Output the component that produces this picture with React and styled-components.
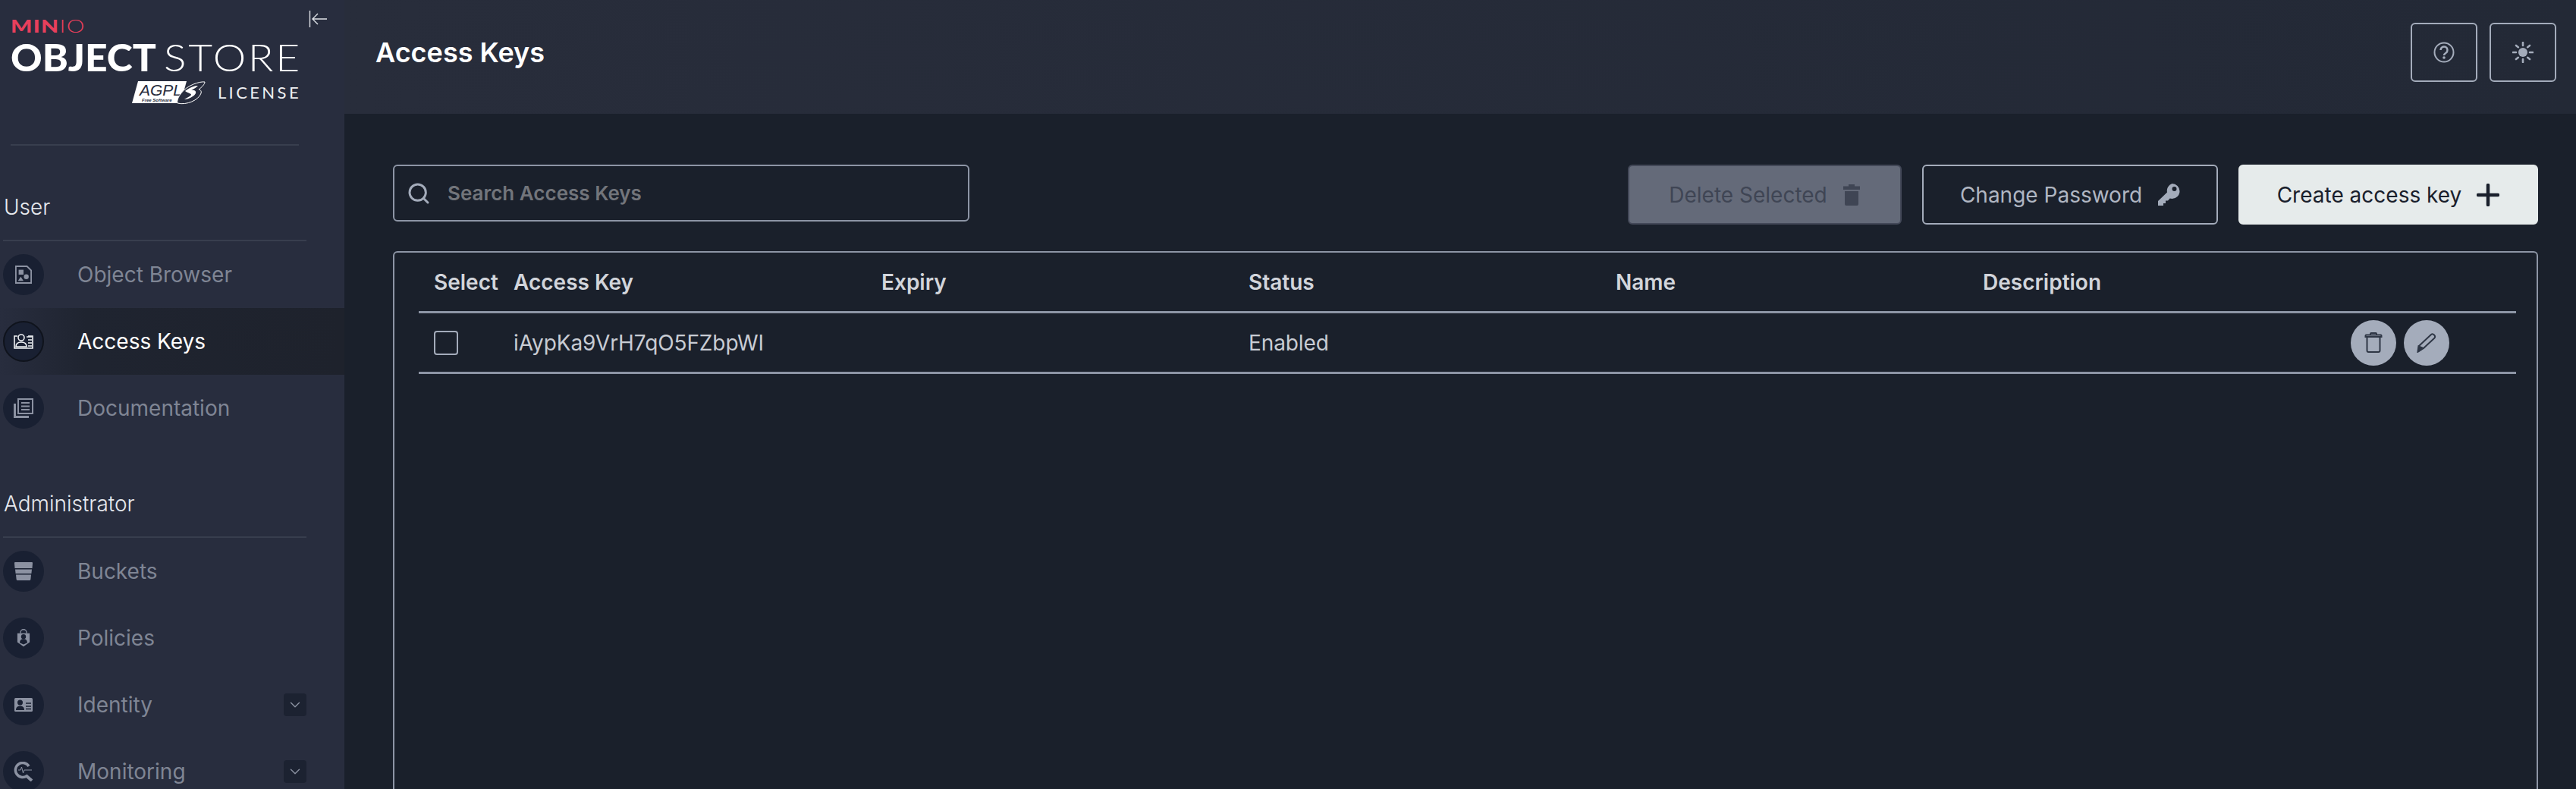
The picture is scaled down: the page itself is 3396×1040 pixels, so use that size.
import React from "react";
import styled, { createGlobalStyle } from "styled-components";
import { ChevronDown, Search } from "lucide-react";

const Global = createGlobalStyle`
  html, body { margin: 0; padding: 0; background: #1a202b; }
  body { font-family: Inter, "Liberation Sans", sans-serif; overflow: hidden; }
  * { box-sizing: border-box; }
`;

const Page = styled.div`
  display: grid;
  grid-template-columns: 454px 1fr;
  width: 3396px;
  height: 1040px;
  overflow: hidden;
`;

const Sidebar = styled.aside`
  background: #282d3e;
  height: 1040px;
  overflow: hidden;
  display: flex;
  flex-direction: column;

  & > * {
    flex: none;
  }
`;

const LogoArea = styled.div`
  height: 190px;
  padding: 14px 0 0 14px;
  display: flex;
  flex-direction: column;
  position: relative;
`;

const CollapseIcon = styled.svg`
  position: absolute;
  left: 407px;
  top: 13px;
  width: 25px;
  height: 24px;
`;

const MinioMark = styled.div`
  margin-top: 9px;
  height: 22px;
  display: flex;
  align-items: center;
  color: #e73f5c;
  font-family: Lato, sans-serif;
  font-size: 23px;
  line-height: 22px;
  letter-spacing: 1px;
  transform-origin: left center;
  transform: scaleX(1.3);
`;

const MinioBold = styled.span`
  font-weight: 900;
`;

const MinioThin = styled.span`
  font-weight: 300;
`;

const ObjectStore = styled.div`
  margin-top: 9px;
  height: 42px;
  display: flex;
  align-items: center;
  color: #fff;
  font-family: Lato, sans-serif;
  font-size: 50px;
  line-height: 42px;
  white-space: nowrap;
`;

const ObjectBold = styled.span`
  display: inline-block;
  width: 202px;
  font-weight: 900;
  transform-origin: left center;
  transform: scaleX(1.03);
`;

const StoreThin = styled.span`
  display: inline-block;
  font-weight: 300;
  letter-spacing: 2.6px;
  transform-origin: left center;
  transform: scaleX(1.1);
`;

const LicenseRow = styled.div`
  margin-top: 10px;
  width: 380px;
  display: flex;
  justify-content: flex-end;
  align-items: center;
  gap: 16px;
`;

const LicenseText = styled.span`
  color: #eef0f3;
  font-family: Lato, sans-serif;
  font-size: 22px;
  letter-spacing: 3.4px;
  margin-right: -3px;
  font-weight: 400;
  line-height: 24px;
`;

const Divider = styled.div`
  height: 2px;
  background: #383e4e;
  width: ${(p) => p.$width}px;
  margin-left: ${(p) => p.$left}px;
`;

const SectionTitle = styled.div`
  color: #e6e9ee;
  font-size: 28px;
  font-weight: 300;
  line-height: 34px;
  padding-left: 5px;
  margin-top: ${(p) => p.$top}px;
  margin-bottom: 26px;
`;

const NavItem = styled.div`
  height: 88px;
  flex: none;
  display: flex;
  align-items: center;
  padding-left: 4px;
  background: ${(p) =>
    p.$active ? "linear-gradient(90deg, #282d3e 0%, #1f2430 25%, #1e222c 100%)" : "transparent"};
`;

const NavCircle = styled.div`
  width: 54px;
  height: 54px;
  border-radius: 50%;
  background: #192032;
  color: ${(p) => (p.$active ? "#f0f2f5" : "#8c92a2")};
  border: ${(p) => (p.$active ? "2px solid #0f131c" : "0")};
  display: flex;
  align-items: center;
  justify-content: center;
  flex: none;
`;

const NavLabel = styled.span`
  margin-left: 44px;
  font-size: 28px;
  line-height: 34px;
  color: ${(p) => (p.$active ? "#fff" : "#7f8594")};
  flex: 1;
`;

const Chevron = styled.div`
  width: 30px;
  height: 30px;
  margin-right: 50px;
  border-radius: 4px;
  background: #1c2231;
  color: #8c92a2;
  display: flex;
  align-items: center;
  justify-content: center;
`;

const NavList = styled.div`
  display: flex;
  flex-direction: column;
`;

const Main = styled.main`
  display: flex;
  flex-direction: column;
  min-width: 0;
  height: 1040px;
  overflow: hidden;
`;

const Header = styled.header`
  height: 150px;
  flex: none;
  background: linear-gradient(90deg, #282d3b 0%, #232936 100%);
  display: flex;
  align-items: center;
  justify-content: space-between;
  padding: 0 26px 12px 41px;
`;

const Title = styled.h1`
  margin: 0;
  color: #fff;
  font-size: 36px;
  line-height: 46px;
  font-weight: 600;
`;

const HeaderActions = styled.div`
  display: flex;
  gap: 16px;
`;

const IconButton = styled.div`
  width: 88px;
  height: 78px;
  border: 2px solid #a4acbb;
  border-radius: 6px;
  color: #a4acbb;
  display: flex;
  align-items: center;
  justify-content: center;
`;

const Content = styled.div`
  flex: 1;
  padding: 67px 50px 0 64px;
  display: flex;
  flex-direction: column;
  background: #1a202b;
`;

const Toolbar = styled.div`
  display: flex;
  justify-content: space-between;
  align-items: flex-start;
  height: 114px;
`;

const SearchBox = styled.div`
  width: 760px;
  height: 75px;
  border: 2px solid #8d95a5;
  border-radius: 6px;
  display: flex;
  align-items: center;
  padding-left: 16px;
  color: #a4acbb;
`;

const SearchText = styled.span`
  margin-left: 22px;
  color: #72757b;
  font-size: 26px;
  font-weight: 600;
  line-height: 32px;
`;

const Buttons = styled.div`
  display: flex;
  gap: 27px;
`;

const ActionButton = styled.div`
  width: ${(p) => p.$width}px;
  height: 79px;
  border-radius: 6px;
  display: flex;
  align-items: center;
  justify-content: center;
  gap: 20px;
  font-size: 28px;
  line-height: 34px;
  white-space: nowrap;
  border: 2px solid ${(p) => ({ off: "#434858", line: "#a4acbb", solid: "#e6ebeb" })[p.$kind]};
  background: ${(p) => ({ off: "#646a79", line: "transparent", solid: "#e6ebeb" })[p.$kind]};
  color: ${(p) => ({ off: "#3f4554", line: "#b0b6c2", solid: "#1a202c" })[p.$kind]};
`;

const KeyTable = styled.div`
  flex: 1;
  border: 2px solid #8d95a5;
  border-bottom: 0;
  border-radius: 6px 6px 0 0;
  padding: 0 27px 0 32px;
`;

const TableRow = styled.div`
  height: 80px;
  padding-left: 20px;
  display: grid;
  grid-template-columns: 105px 485px 484px 484px 484px 1fr;
  align-items: center;
  border-bottom: 3px solid #8d95a5;
`;

const HeadCell = styled.div`
  color: #d2d5db;
  font-size: 28px;
  font-weight: 600;
  line-height: 34px;
  white-space: nowrap;
`;

const Cell = styled.div`
  color: #c8ccd4;
  font-size: 28px;
  line-height: 34px;
  letter-spacing: -0.1px;
  white-space: nowrap;
`;

const Checkbox = styled.div`
  width: 32px;
  height: 32px;
  border: 2px solid #a4acbb;
  border-radius: 4px;
`;

const RowActions = styled.div`
  display: flex;
  justify-content: flex-end;
  gap: 10px;
  padding-right: 88px;
`;

const RoundButton = styled.div`
  width: 60px;
  height: 60px;
  border-radius: 50%;
  background: #a4acbb;
  color: #2f3746;
  display: flex;
  align-items: center;
  justify-content: center;
`;

const ObjectIcon = () => (
  <svg width="22" height="24" viewBox="0 0 24 26" fill="none">
    <path d="M1 1h16l6 6v18H1z" stroke="currentColor" strokeWidth="2" />
    <rect x="5" y="6" width="7" height="7" fill="currentColor" />
    <circle cx="16" cy="16" r="3.500" fill="currentColor" />
    <path d="M4 22l4-6 4 6z" fill="currentColor" />
  </svg>
);

const AccessIcon = () => (
  <svg width="26" height="20" viewBox="0 0 26 20" fill="none" stroke="currentColor" strokeWidth="1.600">
    <path d="M5 3H1v16h24V3h-6" />
    <circle cx="10" cy="5" r="4" />
    <path d="M3 17c0-4 3-6 7-6s7 2 7 6z" />
    <path d="M17 4h7M19 8h5M19 12h5M19 16h5" />
  </svg>
);

const DocsIcon = () => (
  <svg width="26" height="26" viewBox="0 0 26 26" fill="none" stroke="currentColor">
    <rect x="6" y="1" width="19" height="19" strokeWidth="2" />
    <path d="M10 6h11M10 10.500h11M10 15h11" strokeWidth="2" />
    <path d="M1.500 7v17.500H20" strokeWidth="3" />
  </svg>
);

const BucketIcon = () => (
  <svg width="24" height="24" viewBox="0 0 24 24" fill="currentColor">
    <path d="M0 1q0-1 1-1h22q1 0 1 1l-.5 7H.5z" />
    <path d="M1 9.500h22l-.6 5.500H1.600z" />
    <path d="M2 16.500h20l-.6 6q-.1 1.500-1.500 1.500H4.100q-1.400 0-1.500-1.500z" />
  </svg>
);

const PolicyIcon = () => (
  <svg width="18" height="24" viewBox="0 0 20 26">
    <path d="M5.500 6V5a4.500 4.500 0 0 1 9 0v1" fill="none" stroke="currentColor" strokeWidth="1.500" />
    <path d="M1 6h18v13l-9 6.500L1 19z" fill="currentColor" />
    <circle cx="10" cy="11" r="3.500" fill="#192032" />
    <path d="M4.500 20c0-4 2.500-5.500 5.500-5.500s5.500 1.500 5.500 5.500l-5.500 2.500z" fill="#192032" />
  </svg>
);

const IdentityIcon = () => (
  <svg width="24" height="18" viewBox="0 0 24 18">
    <path d="M1.500 0h21Q24 0 24 1.500v15q0 1.500-1.500 1.500h-21Q0 18 0 16.500v-15Q0 0 1.500 0z" fill="currentColor" />
    <circle cx="7.500" cy="6" r="3.500" fill="#192032" />
    <path d="M2 16c0-4 2.500-5.500 5.500-5.500S13 12 13 16z" fill="#192032" />
    <path d="M15 7h7M15 11h7M15 14.500h7" stroke="#192032" strokeWidth="1.500" />
  </svg>
);

const MonitorIcon = () => (
  <svg width="26" height="26" viewBox="0 0 26 26" fill="none">
    <path d="M20 6a9.500 9.500 0 1 0-3 13" stroke="currentColor" strokeWidth="3.500" />
    <path d="M16 18l8 7" stroke="currentColor" strokeWidth="4" />
    <path d="M6 11h3l1.500-4 2 8 1.500-4h10" stroke="currentColor" strokeWidth="1" />
  </svg>
);

const TrashSolid = () => (
  <svg width="24" height="28" viewBox="0 0 24 28" fill="currentColor">
    <path d="M8 0h8v2.500h7V7H1V2.500h7z" />
    <path d="M3 9h18v17q0 2-2 2H5q-2 0-2-2z" />
  </svg>
);

const KeyIcon = () => (
  <svg width="30" height="30" viewBox="0 0 30 30" fill="#a4acbb">
    <path d="M19.500 0a10 10 0 0 1 0 20 10 10 0 0 1-2.800-.4L14 22.500h-3V26H8v3H1v-6l12-11.500A10 10 0 0 1 19.500 0zm3 4a3 3 0 1 0 0 6 3 3 0 0 0 0-6z" />
  </svg>
);

const PlusIcon = () => (
  <svg width="30" height="30" viewBox="0 0 30 30" fill="none" stroke="currentColor" strokeWidth="4.500" strokeLinecap="round">
    <path d="M15 2v26M2 15h26" />
  </svg>
);

const TrashOutline = () => (
  <svg width="24" height="27" viewBox="0 0 24 27" fill="none" stroke="currentColor" strokeWidth="2">
    <path d="M1.500 4.500q0-1 1-1h19q1 0 1 1V6h-21z" />
    <path d="M8 3V2q0-1 1-1h6q1 0 1 1v1" />
    <path d="M3.500 6v18q0 2 2 2h13q2 0 2-2V6" />
  </svg>
);

const PencilIcon = () => (
  <svg width="26" height="26" viewBox="0 0 26 26" fill="none" stroke="currentColor" strokeWidth="2">
    <path d="M19 2q2-1.600 4 .5t.5 4L9 20l-7 4.500 1-7.500z" strokeLinejoin="round" />
    <path d="M1.500 24.500l1-7 6 2.500z" fill="currentColor" />
  </svg>
);

const HelpIcon = () => (
  <svg width="28" height="28" viewBox="0 0 28 28" fill="none" stroke="currentColor">
    <circle cx="14" cy="14" r="12.500" strokeWidth="2" />
    <path d="M9.500 11a4.500 4.500 0 1 1 7 3.700c-1.500 1-2.500 1.800-2.500 3.300" strokeWidth="2.500" />
    <circle cx="14" cy="21" r="1.800" fill="currentColor" stroke="none" />
  </svg>
);

const SunIcon = () => (
  <svg width="28" height="28" viewBox="0 0 28 28" fill="currentColor" stroke="currentColor">
    <circle cx="14" cy="14" r="6" stroke="none" />
    <path
      d="M14 1v4M14 23v4M1 14h4M23 14h4M5 5l2.800 2.200M23 5l-2.800 2.200M5 23l2.800-2.200M23 23l-2.800-2.200"
      strokeWidth="2.600"
      strokeLinecap="round"
    />
  </svg>
);

const AgplBadge = () => (
  <svg width="97" height="32" viewBox="0 0 97 32">
    <path d="M8 1h64l-8 29H0z" fill="#fff" />
    <text x="10" y="20" fontFamily="Liberation Sans, sans-serif" fontStyle="italic" fontSize="21" fill="#282d3e" textLength="56">
      AGPL
    </text>
    <text x="13" y="28" fontFamily="Liberation Sans, sans-serif" fontStyle="italic" fontWeight="700" fontSize="6" fill="#282d3e">
      Free Software
    </text>
    <path d="M60 30C72 33 88 26 91 17c1-3-1-5-3-5 4-3 8-7 8-10C90 1 72 6 64 18c-3 4-5 9-4 12z" fill="#282d3e" stroke="#fff" strokeWidth="1" />
    <path d="M70 14c5-4 12-7 17-7-3 3-7 5-9 6 4-1 7 1 6 4-2 4-9 8-15 8 3-2 8-4 9-6 0-2-4-2-8-5z" fill="#fff" />
  </svg>
);

const userItems = [
  { label: "Object Browser", icon: <ObjectIcon /> },
  { label: "Access Keys", icon: <AccessIcon />, active: true },
  { label: "Documentation", icon: <DocsIcon /> },
];

const adminItems = [
  { label: "Buckets", icon: <BucketIcon /> },
  { label: "Policies", icon: <PolicyIcon /> },
  { label: "Identity", icon: <IdentityIcon />, more: true },
  { label: "Monitoring", icon: <MonitorIcon />, more: true },
];

function SideItem({ item }) {
  return (
    <NavItem $active={item.active}>
      <NavCircle $active={item.active}>{item.icon}</NavCircle>
      <NavLabel $active={item.active}>{item.label}</NavLabel>
      {item.more && (
        <Chevron>
          <ChevronDown size={22} strokeWidth={1.5} />
        </Chevron>
      )}
    </NavItem>
  );
}

export default function App() {
  return (
    <>
      <Global />
      <Page>
        <Sidebar>
          <LogoArea>
            <CollapseIcon viewBox="0 0 25 24" fill="none" stroke="#dfe2e7" strokeWidth="1.400">
              <path d="M1.500 1v22M24 12H5M12 5l-7 7 7 7" />
            </CollapseIcon>
            <MinioMark>
              <MinioBold>MIN</MinioBold>
              <MinioThin>IO</MinioThin>
            </MinioMark>
            <ObjectStore>
              <ObjectBold>OBJECT</ObjectBold>
              <StoreThin>STORE</StoreThin>
            </ObjectStore>
            <LicenseRow>
              <AgplBadge />
              <LicenseText>LICENSE</LicenseText>
            </LicenseRow>
          </LogoArea>
          <Divider $left={14} $width={380} />
          <SectionTitle $top={64}>User</SectionTitle>
          <Divider $left={4} $width={400} />
          <NavList>
            {userItems.map((item) => (
              <SideItem key={item.label} item={item} />
            ))}
          </NavList>
          <SectionTitle $top={65}>Administrator</SectionTitle>
          <Divider $left={4} $width={400} />
          <NavList>
            {adminItems.map((item) => (
              <SideItem key={item.label} item={item} />
            ))}
          </NavList>
        </Sidebar>
        <Main>
          <Header>
            <Title>Access Keys</Title>
            <HeaderActions>
              <IconButton>
                <HelpIcon />
              </IconButton>
              <IconButton>
                <SunIcon />
              </IconButton>
            </HeaderActions>
          </Header>
          <Content>
            <Toolbar>
              <SearchBox>
                <Search size={32} strokeWidth={2.2} />
                <SearchText>Search Access Keys</SearchText>
              </SearchBox>
              <Buttons>
                <ActionButton $kind="off" $width={361}>
                  Delete Selected
                  <TrashSolid />
                </ActionButton>
                <ActionButton $kind="line" $width={390}>
                  Change Password
                  <KeyIcon />
                </ActionButton>
                <ActionButton $kind="solid" $width={395}>
                  Create access key
                  <PlusIcon />
                </ActionButton>
              </Buttons>
            </Toolbar>
            <KeyTable>
              <TableRow>
                <HeadCell>Select</HeadCell>
                <HeadCell>Access Key</HeadCell>
                <HeadCell>Expiry</HeadCell>
                <HeadCell>Status</HeadCell>
                <HeadCell>Name</HeadCell>
                <HeadCell>Description</HeadCell>
              </TableRow>
              <TableRow>
                <Checkbox />
                <Cell>iAypKa9VrH7qO5FZbpWI</Cell>
                <Cell />
                <Cell>Enabled</Cell>
                <Cell />
                <RowActions>
                  <RoundButton>
                    <TrashOutline />
                  </RoundButton>
                  <RoundButton>
                    <PencilIcon />
                  </RoundButton>
                </RowActions>
              </TableRow>
            </KeyTable>
          </Content>
        </Main>
      </Page>
    </>
  );
}
